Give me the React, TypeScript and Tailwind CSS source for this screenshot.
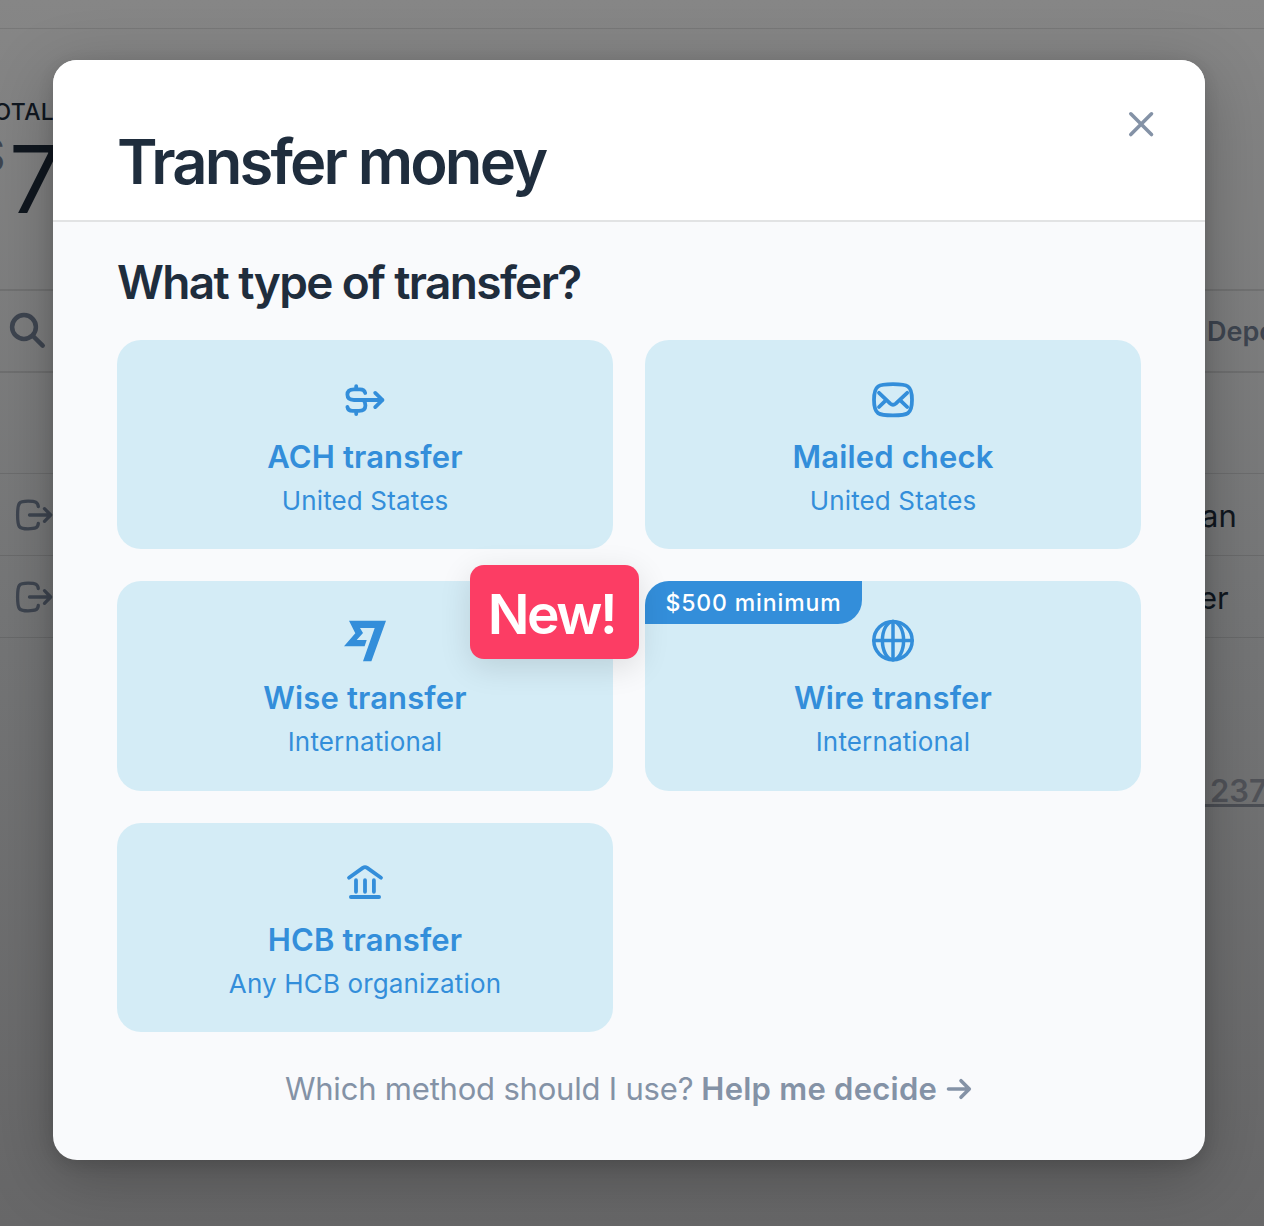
import type { ReactNode } from "react";

function Svg({ children, width = 3.8 }: { children: ReactNode; width?: number }) {
  return (
    <svg
      viewBox="0 0 48 48"
      className="block size-12 shrink-0"
      fill="none"
      stroke="currentColor"
      strokeWidth={width}
      strokeLinecap="round"
      strokeLinejoin="round"
    >
      {children}
    </svg>
  );
}

const AchIcon = () => (
  <Svg>
    <path d="M15.2 10.2v3M15.2 35v3" />
    <path d="M24.2 17c-.5-2.6-2.4-3.7-5.2-3.7h-6c-4.3 0-6.6 1.7-6.6 5.3S8.7 24 13 24h28" />
    <path d="M6.4 30.9c.4 2.7 2.3 3.9 5.2 3.9H18c4.300 0 6.400-1.800 6.400-5.400 0-2.200-.7-3.900-2.200-5.400" />
    <path d="M34.200 16.900 41.500 24l-7.300 7.100" />
  </Svg>
);

const MailIcon = () => (
  <Svg>
    <path d="M24 8.200c14.500 0 19 .8 19 15.600S38.500 39.400 24 39.400 5 38.600 5 23.800 9.500 8.200 24 8.200Z" />
    <path d="m10 16.800 11.300 10.800c1.900 1.700 3.500 1.700 5.400 0L38.200 16.800M10 31l6.800-6.700M38.200 31l-6.900-6.700" />
  </Svg>
);

const WiseIcon = () => (
  <svg viewBox="0 0 48 48" className="block size-12 shrink-0" fill="currentColor">
    <path d="M8 3.800H45L30.400 44.200H22L33.700 10.900H19L22 15.900 15.700 22.900H25.700L23.600 29.200H3L14.300 16.200Z" />
  </svg>
);

const GlobeIcon = () => (
  <Svg width={3.5}>
    <circle cx="24" cy="23.600" r="19.200" />
    <ellipse cx="24" cy="23.600" rx="10.600" ry="19.200" />
    <path d="M24 4.400v38.400M4.800 23.600h38.400" />
  </Svg>
);

const BankIcon = () => (
  <Svg>
    <path d="M8 18.700 21.800 8.900c1.500-1 2.900-1 4.400 0L40 18.700M15 21.200v11.600M24 21.200v11.600M32.900 21.200v11.600M9.900 38h28.200" />
  </Svg>
);

type Method = { title: string; sub: string; icon: ReactNode; badge?: ReactNode };

const methods: Method[] = [
  { title: "ACH transfer", sub: "United States", icon: <AchIcon /> },
  { title: "Mailed check", sub: "United States", icon: <MailIcon /> },
  {
    title: "Wise transfer",
    sub: "International",
    icon: <WiseIcon />,
    badge: (
      <span className="absolute -top-4 -right-[26px] z-10 flex h-[94px] w-[169px] items-center justify-center rounded-[14px] bg-[#fc3d64] pt-[3px] pr-[6px] text-[55px] font-semibold tracking-[-2.5px] text-white shadow-[0_8px_32px_rgba(0,0,0,0.12)]">
        New!
      </span>
    ),
  },
  {
    title: "Wire transfer",
    sub: "International",
    icon: <GlobeIcon />,
    badge: (
      <span className="absolute top-0 left-0 flex h-[43px] w-[217px] items-center justify-center rounded-tl-3xl rounded-br-3xl bg-[#338eda] pt-px text-[23px] font-medium tracking-[0.9px] text-white">
        $500 minimum
      </span>
    ),
  },
  { title: "HCB transfer", sub: "Any HCB organization", icon: <BankIcon /> },
];

function Card({ title, sub, icon, badge }: Method) {
  return (
    <button className="relative flex flex-col items-center rounded-3xl bg-[#d4ecf6] pt-9 text-[#338eda]">
      {badge}
      {icon}
      <span className="mt-[13px] text-[31px] leading-10 font-semibold tracking-[0.14px]">{title}</span>
      <span className="mt-1 text-[26px] leading-10 tracking-[0.15px]">{sub}</span>
    </button>
  );
}

const ExitIcon = () => (
  <svg viewBox="0 0 48 48" className="ml-[10px] block size-12" fill="none" stroke="#3e4550" strokeWidth="3.300" strokeLinecap="round" strokeLinejoin="round">
    <path d="M28.300 15.500c-.5-4.500-2.700-5.300-10.300-5.300-9 0-10.400 1.200-10.400 13.800S9 37.800 18 37.800c7.600 0 9.800-.8 10.300-5.300M19.500 24H40.500M34.500 17.700 40.700 24l-6.200 6.300" />
  </svg>
);

function Backdrop() {
  return (
    <div className="flex h-full flex-col bg-linear-to-b from-[#868686] via-[#757677] to-[#676768] text-[#10171f]">
      <div className="h-[29px] shrink-0 border-b border-black/10" />
      <div className="h-[260px] shrink-0 pt-[67px]">
        <p className="-ml-[21px] text-[23px] leading-8 font-medium tracking-[0.300px]">TOTAL</p>
        <p className="-ml-[24px] flex items-start">
          <span className="w-[33px] text-[46px] leading-[54px] text-[#3e4550]">$</span>
          <span className="text-[93px] leading-[102px]">7</span>
        </p>
      </div>
      <div className="flex h-[84px] shrink-0 items-center justify-between border-y-2 border-black/10 text-[#3e4550]">
        <svg viewBox="0 0 48 48" className="ml-[3px] block size-12" fill="none" stroke="currentColor" strokeWidth="4.500" strokeLinecap="round">
          <circle cx="21" cy="20" r="11.900" />
          <path d="m30 29 9.700 9.700" />
        </svg>
        <span className="w-[57px] pt-[3px] text-[27px] font-semibold">Deposits</span>
      </div>
      <div className="h-[101px] shrink-0 border-b border-black/10" />
      <div className="flex h-[82px] shrink-0 items-center justify-between border-b border-black/10">
        <ExitIcon />
        <span className="w-[63px] pt-1 text-[31px]">an</span>
      </div>
      <div className="flex h-[82px] shrink-0 items-center justify-between border-b border-black/10">
        <ExitIcon />
        <span className="w-[65px] pt-1 text-[31px]">er</span>
      </div>
      <div className="mt-[136px] ml-auto h-[33px] w-[74px] border-b-[3px] border-[#4b4e54] pl-5 text-[31px] leading-[33px] font-semibold text-[#505258]">
        237
      </div>
    </div>
  );
}

export default function App() {
  return (
    <div className="grid h-[1226px] w-[1264px] grid-cols-1 grid-rows-1 overflow-hidden font-['Inter',sans-serif]">
      <div className="col-start-1 row-start-1 h-[1226px] overflow-hidden whitespace-nowrap">
        <Backdrop />
      </div>
      <main className="z-10 col-start-1 row-start-1 mt-[60px] ml-[53px] flex h-[1100px] w-[1152px] flex-col rounded-3xl bg-[#f9fafc] shadow-[0_16px_64px_rgba(0,0,0,0.25),0_4px_16px_rgba(0,0,0,0.12)]">
        <header className="flex h-[162px] shrink-0 justify-between rounded-t-3xl border-b-2 border-[#e2e3e4] bg-white pr-10 pl-16">
          <h1 className="pt-[62px] text-[61.500px] leading-20 font-semibold tracking-[-2.850px] text-[#1f2d3d]">
            Transfer money
          </h1>
          <button aria-label="Close" className="mt-10 size-12 text-[#8492a6]">
            <Svg width={3.600}>
              <path d="m13.800 13.800 20.700 20.700M34.500 13.800 13.800 34.500" />
            </Svg>
          </button>
        </header>
        <section className="flex flex-col px-16">
          <h2 className="pt-[31px] text-[46px] leading-[58px] font-semibold tracking-[-1.640px] text-[#1f2d3d]">
            What type of transfer?
          </h2>
          <div className="mt-[29px] grid auto-rows-[209.330px] grid-cols-2 gap-8">
            {methods.map((m) => (
              <Card key={m.title} {...m} />
            ))}
          </div>
          <p className="mt-9 flex items-center justify-center text-[31px] leading-[42px] text-[#8492a6]">
            <span className="tracking-[-0.200px]">Which method should I use?</span>
            <a className="ml-2 flex items-center font-semibold tracking-[0.250px]">
              Help me decide
              <svg viewBox="0 0 28 28" className="ml-2 size-7" fill="none" stroke="currentColor" strokeWidth="3.600" strokeLinecap="round" strokeLinejoin="round">
                <path d="M3.500 14h20.500M16 5.700 24.300 14 16 22.300" />
              </svg>
            </a>
          </p>
        </section>
      </main>
    </div>
  );
}
